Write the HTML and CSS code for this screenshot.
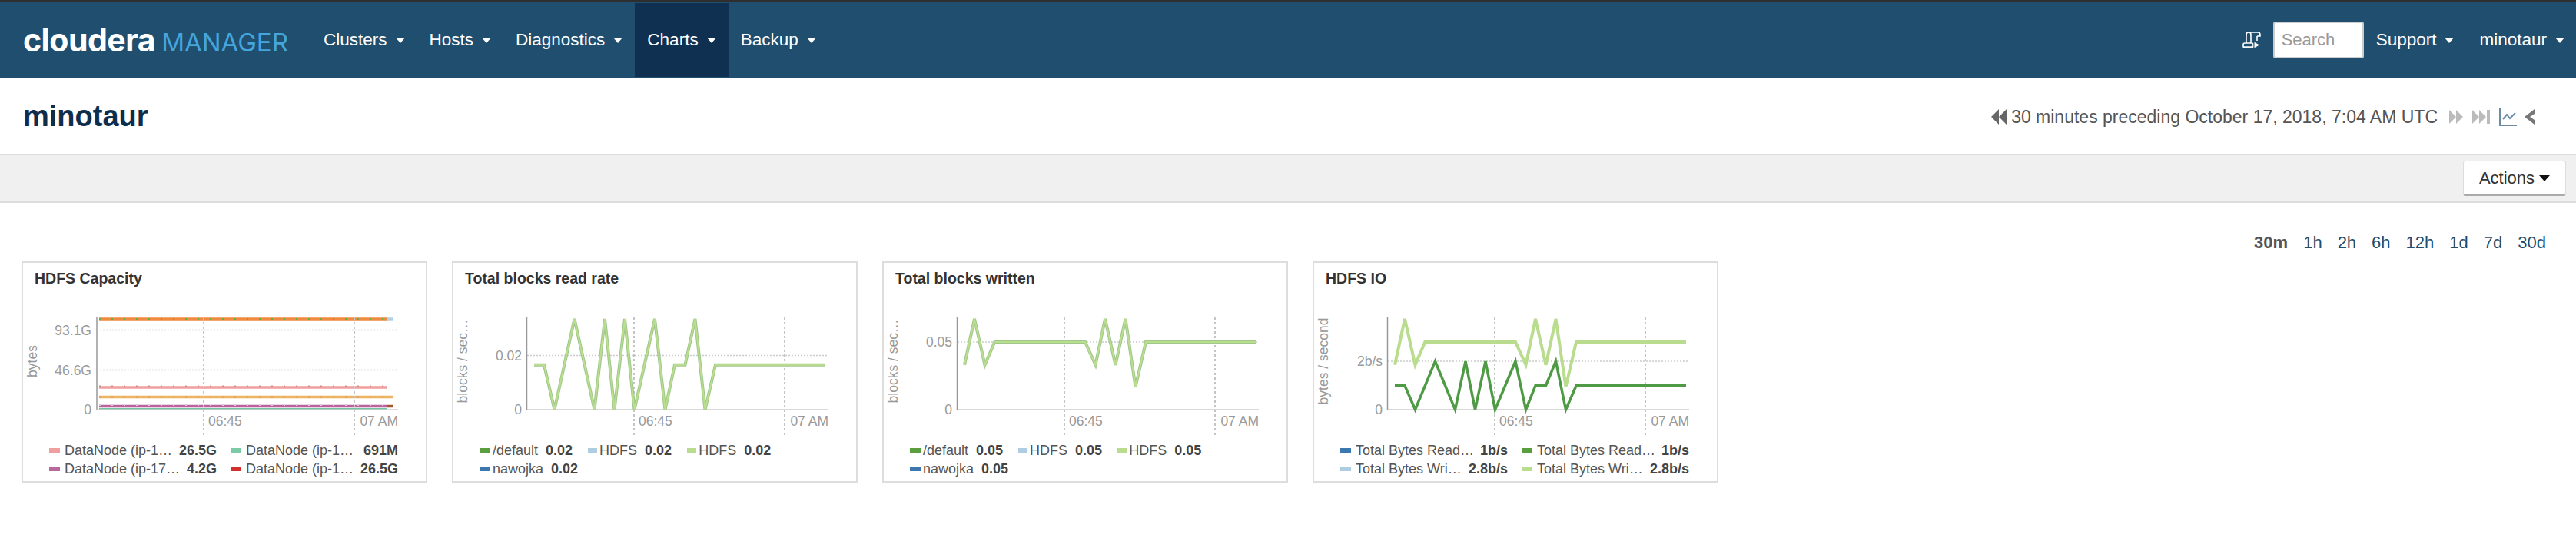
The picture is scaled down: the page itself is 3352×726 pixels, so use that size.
FILE: index.html
```html
<!DOCTYPE html>
<html lang="en">
<head>
  <meta charset="UTF-8">
  <title>minotaur - Cloudera Manager</title>
  <link rel="stylesheet" href="styles.css">
</head>
<body>

  <nav class="navbar">
    <a class="brand"><span class="brand-name">cloudera</span> <span class="brand-product">MANAGER</span></a>
    <ul class="nav-list">
      <li class="nav-item">Clusters <i class="caret"></i></li>
      <li class="nav-item">Hosts <i class="caret"></i></li>
      <li class="nav-item">Diagnostics <i class="caret"></i></li>
      <li class="nav-item active">Charts <i class="caret"></i></li>
      <li class="nav-item">Backup <i class="caret"></i></li>
    </ul>
    <div class="nav-right">
      <svg class="scroll-icon" viewBox="0 0 24 22" width="24" height="22">
        <path d="M1 20h13M5 15V4a3 3 0 0 1 3-3h12a3 3 0 0 1 3 3v2h-4M8 1a3 3 0 0 1 3 3v11M19 6v6"/>
        <rect x="1" y="15" width="13" height="6" rx="2"/>
        <path class="scroll-play" d="M15 13l8 4.5-8 4.5z"/>
      </svg>
      <input class="nav-search" type="text" placeholder="Search">
      <span class="nav-item support">Support <i class="caret"></i></span>
      <span class="nav-item user">minotaur <i class="caret"></i></span>
    </div>
  </nav>

  <header class="page-header">
    <h1>minotaur</h1>
    <div class="time-control">
      <svg class="t-icon dark" viewBox="0 0 20 22" width="20" height="22"><path d="M10 1v20L0 11zM20 1v20L10 11z"/></svg>
      <span class="time-label">30 minutes preceding October 17, 2018, 7:04 AM UTC</span>
      <svg class="t-icon muted next" viewBox="0 0 18 22" width="18" height="22"><path d="M0 2v18l9-9zM9 2v18l9-9z"/></svg>
      <svg class="t-icon muted end" viewBox="0 0 23 22" width="23" height="22"><path d="M0 2v18l9-9zM9 2v18l9-9zM19 2h4v18h-4z"/></svg>
      <svg class="chart-icon" viewBox="0 0 23 24" width="23" height="24">
        <path d="M1 0v23h22M5 15l5-6 4 5 7-7"/>
      </svg>
      <svg class="t-icon chevron" viewBox="0 0 13 22" width="13" height="22"><path d="M13 1v6l-6 4 6 4v6L0 11z"/></svg>
    </div>
  </header>

  <div class="toolbar">
    <button class="btn-actions">Actions <i class="caret dark"></i></button>
  </div>

  <div class="range-links">
    <a class="current">30m</a>
    <a>1h</a>
    <a>2h</a>
    <a>6h</a>
    <a>12h</a>
    <a>1d</a>
    <a>7d</a>
    <a>30d</a>
  </div>

  <main class="chart-row">

    <section class="chart-card">
      <h3>HDFS Capacity</h3>
      <svg class="plot" viewBox="0 0 524 174" width="524" height="174">
        <path class="grid" d="M96 33.5H488M96 85.5H488"/>
        <path class="band" stroke="#f08a3c" d="M99 19H474"/>
        <path class="band" stroke="#b0d0e4" d="M474 19H482"/>
        <path class="band-dots" stroke="#6aa84f" d="M99 19H474"/>
        <path class="band" stroke="#ef9f9d" d="M99 108H474"/>
        <path class="band-dots" stroke="#d98b80" d="M99 106.5H474"/>
        <path class="band" stroke="#ebb561" d="M99 120.5H482"/>
        <path class="band-dots" stroke="#f08a6c" d="M99 120.5H474"/>
        <path class="band" stroke="#b9629c" d="M99 132.5H474"/>
        <path class="band" stroke="#a9562e" d="M474 132.5H482"/>
        <path class="band-dots" stroke="#e0c8e0" d="M99 131H474"/>
        <path class="band thin" stroke="#6fc39d" d="M99 136H474"/>
        <path class="vgrid" d="M235 17V170M431 17V170"/>
        <path class="axis-y" d="M96 17V137"/>
        <path class="axis-x" d="M96 137H488"/>
        <text class="tick" x="89" y="39.500" text-anchor="end">93.1G</text>
        <text class="tick" x="89" y="91.500" text-anchor="end">46.6G</text>
        <text class="tick" x="89" y="143" text-anchor="end">0</text>
        <text class="tick" x="241" y="158">06:45</text>
        <text class="tick" x="488" y="158" text-anchor="end">07 AM</text>
        <text class="tick" transform="translate(18 74) rotate(-90)" text-anchor="middle">bytes</text>
      </svg>
      <div class="legend two-col">
        <div class="legend-item"><i class="swatch" style="background:#ef9f9d"></i><span class="name">DataNode (ip-1…</span><b>26.5G</b></div>
        <div class="legend-item"><i class="swatch" style="background:#7bcba6"></i><span class="name">DataNode (ip-1…</span><b>691M</b></div>
        <div class="legend-item"><i class="swatch" style="background:#b9689b"></i><span class="name">DataNode (ip-17…</span><b>4.2G</b></div>
        <div class="legend-item"><i class="swatch" style="background:#d2322d"></i><span class="name">DataNode (ip-1…</span><b>26.5G</b></div>
      </div>
    </section>

    <section class="chart-card">
      <h3>Total blocks read rate</h3>
      <svg class="plot" viewBox="0 0 524 174" width="524" height="174">
        <path class="grid" d="M96 66.500H488"/>
        <path class="vgrid" d="M235 17V170M431 17V170"/>
        <path class="axis-y" d="M95.500 17V137"/>
        <path class="axis-x" d="M96 137H488"/>
        <polyline class="line-under" points="105,78.700 118,78.700 131.500,137 157.500,19 183.500,137 197,19 209.500,137 223,19 235.500,137 262,19 275.500,137 288,78.700 301.500,78.700 314.500,19 327.500,137 341,78.700 484,78.700"/>
        <polyline class="line-over" points="105,78.700 118,78.700 131.500,137 157.500,19 183.500,137 197,19 209.500,137 223,19 235.500,137 262,19 275.500,137 288,78.700 301.500,78.700 314.500,19 327.500,137 341,78.700 484,78.700"/>
        <text class="tick" x="89" y="72.500" text-anchor="end">0.02</text>
        <text class="tick" x="89" y="143" text-anchor="end">0</text>
        <text class="tick" x="241" y="158">06:45</text>
        <text class="tick" x="488" y="158" text-anchor="end">07 AM</text>
        <text class="tick" transform="translate(18 74) rotate(-90)" text-anchor="middle">blocks / sec…</text>
      </svg>
      <div class="legend flow">
        <div class="legend-item"><i class="swatch" style="background:#5a9e3f"></i><span class="name">/default</span><b>0.02</b></div>
        <div class="legend-item"><i class="swatch narrow" style="background:#aecde2"></i><span class="name">HDFS</span><b>0.02</b></div>
        <div class="legend-item"><i class="swatch narrow" style="background:#b9dc8e"></i><span class="name">HDFS</span><b>0.02</b></div>
        <div class="legend-break"></div>
        <div class="legend-item"><i class="swatch" style="background:#3c78b0"></i><span class="name">nawojka</span><b>0.02</b></div>
      </div>
    </section>

    <section class="chart-card">
      <h3>Total blocks written</h3>
      <svg class="plot" viewBox="0 0 524 174" width="524" height="174">
        <path class="grid" d="M96 49H488"/>
        <path class="vgrid" d="M235 17V170M431 17V170"/>
        <path class="axis-y" d="M95.500 17V137"/>
        <path class="axis-x" d="M96 137H488"/>
        <polyline class="line-under" points="105,78.700 118,19 131.500,78.700 144.300,49 262,49 275.500,78.700 288,19 301.500,78.700 314.500,19 327.500,107.300 341,49 484,49"/>
        <polyline class="line-over" points="105,78.700 118,19 131.500,78.700 144.300,49 262,49 275.500,78.700 288,19 301.500,78.700 314.500,19 327.500,107.300 341,49 484,49"/>
        <text class="tick" x="89" y="55" text-anchor="end">0.05</text>
        <text class="tick" x="89" y="143" text-anchor="end">0</text>
        <text class="tick" x="241" y="158">06:45</text>
        <text class="tick" x="488" y="158" text-anchor="end">07 AM</text>
        <text class="tick" transform="translate(18 74) rotate(-90)" text-anchor="middle">blocks / sec…</text>
      </svg>
      <div class="legend flow">
        <div class="legend-item"><i class="swatch" style="background:#5a9e3f"></i><span class="name">/default</span><b>0.05</b></div>
        <div class="legend-item"><i class="swatch narrow" style="background:#aecde2"></i><span class="name">HDFS</span><b>0.05</b></div>
        <div class="legend-item"><i class="swatch narrow" style="background:#b9dc8e"></i><span class="name">HDFS</span><b>0.05</b></div>
        <div class="legend-break"></div>
        <div class="legend-item"><i class="swatch" style="background:#3c78b0"></i><span class="name">nawojka</span><b>0.05</b></div>
      </div>
    </section>

    <section class="chart-card">
      <h3>HDFS IO</h3>
      <svg class="plot" viewBox="0 0 524 174" width="524" height="174">
        <path class="grid" d="M96 74H488"/>
        <path class="vgrid" d="M235 17V170M431 17V170"/>
        <path class="axis-y" d="M95.500 17V137"/>
        <path class="axis-x" d="M96 137H488"/>
        <polyline class="line-light" points="105,78.700 118,19 131.500,78.700 144.300,49 262,49 275.500,78.700 288,19 301.500,78.700 314.500,19 327.500,107.300 341,49 484,49"/>
        <polyline class="line-dark" points="105,105.700 118,105.700 131.500,137 157.500,74 183.500,137 197,74 209.500,137 223,74 235.500,137 262,74 275.500,137 288,105.700 301.500,105.700 314.500,74 327.500,137 341,105.700 484,105.700"/>
        <text class="tick" x="89" y="80" text-anchor="end">2b/s</text>
        <text class="tick" x="89" y="143" text-anchor="end">0</text>
        <text class="tick" x="241" y="158">06:45</text>
        <text class="tick" x="488" y="158" text-anchor="end">07 AM</text>
        <text class="tick" transform="translate(18 74) rotate(-90)" text-anchor="middle">bytes / second</text>
      </svg>
      <div class="legend two-col">
        <div class="legend-item"><i class="swatch" style="background:#3c78b0"></i><span class="name">Total Bytes Read…</span><b>1b/s</b></div>
        <div class="legend-item"><i class="swatch" style="background:#5a9e3f"></i><span class="name">Total Bytes Read…</span><b>1b/s</b></div>
        <div class="legend-item"><i class="swatch" style="background:#aecde2"></i><span class="name">Total Bytes Wri…</span><b>2.8b/s</b></div>
        <div class="legend-item"><i class="swatch" style="background:#b9dc8e"></i><span class="name">Total Bytes Wri…</span><b>2.8b/s</b></div>
      </div>
    </section>

  </main>

</body>
</html>
```

FILE: styles.css
```css
* {
  box-sizing: border-box;
}
body {
  margin: 0;
  background: #fff;
  font-family: "Liberation Sans", Arial, sans-serif;
  font-size: 22px;
  color: #555;
}

/* top bar */
.navbar {
  display: flex;
  align-items: stretch;
  height: 102px;
  padding: 2px 0;
  border-top: 2px solid #2e2e2e;
  background: #1f4e6f;
  color: #fff;
}
.brand {
  display: flex;
  align-items: baseline;
  gap: 8px;
  width: 375px;
  padding: 30px 0 0 30px;
  font-family: Inter, "Liberation Sans", sans-serif;
  line-height: 36px;
}
.brand-name {
  font-size: 41px;
  font-weight: 700;
  letter-spacing: -0.5px;
}
.brand-product {
  font-size: 33px;
  font-weight: 400;
  color: #45a5dd;
}
.nav-list {
  display: flex;
  margin: 0 0 0 30px;
  padding: 0;
  list-style: none;
}
.nav-item {
  display: flex;
  align-items: center;
  gap: 11px;
  padding: 0 16px;
  font-size: 22.500px;
  white-space: nowrap;
}
.nav-item.active {
  background: #0f3050;
}
.caret {
  display: inline-block;
  width: 0;
  height: 0;
  border-top: 7px solid #fff;
  border-left: 6px solid transparent;
  border-right: 6px solid transparent;
}
.caret.dark {
  border-top: 8px solid #111;
  border-left-width: 7px;
  border-right-width: 7px;
}
.nav-right {
  display: flex;
  align-items: center;
  margin-left: auto;
}
.scroll-icon {
  margin-right: 16px;
  fill: none;
  stroke: #fff;
  stroke-width: 1.6;
}
.scroll-icon .scroll-play {
  fill: #fff;
  stroke: #1f4e6f;
  stroke-width: 1;
}
.nav-search {
  width: 118px;
  height: 48px;
  padding: 0 9px;
  border: 2px solid #ccc;
  border-radius: 3px;
  font: inherit;
  color: #555;
}
.nav-search::placeholder {
  color: #999;
}
.nav-item.user {
  padding: 0 15px 0 17px;
}

/* page title */
.page-header {
  display: flex;
  align-items: center;
  justify-content: space-between;
  height: 98px;
  padding: 0 54px 0 30px;
}
.page-header h1 {
  margin: 0;
  font-size: 38px;
  font-weight: bold;
  color: #0f2e4c;
}
.time-control {
  display: flex;
  align-items: center;
  padding-top: 2px;
}
.time-label {
  margin: 0 15px 0 6px;
  font-size: 23px;
}
.t-icon {
  fill: #666;
}
.t-icon.muted {
  fill: #bbb;
}
.t-icon.end {
  margin-left: 12px;
}
.chart-icon {
  margin-left: 12px;
  fill: none;
  stroke: #6a8ca5;
  stroke-width: 2;
}
.t-icon.chevron {
  margin-left: 10px;
  fill: #777;
}

/* actions strip */
.toolbar {
  display: flex;
  align-items: center;
  justify-content: flex-end;
  height: 64px;
  padding-right: 13px;
  border-top: 2px solid #ddd;
  border-bottom: 2px solid #ddd;
  background: #f0f0f0;
}
.btn-actions {
  display: flex;
  align-items: center;
  justify-content: center;
  gap: 6px;
  width: 134px;
  height: 46px;
  border: 1px solid #ddd;
  border-bottom: 2px solid #aaa;
  border-radius: 3px;
  background: #fff;
  font: inherit;
  color: #333;
}

/* time ranges */
.range-links {
  display: flex;
  justify-content: flex-end;
  align-items: center;
  gap: 20px;
  height: 76px;
  padding: 28px 39px 0 0;
  color: #1f4e6f;
}
.range-links .current {
  font-weight: bold;
  color: #555;
}

/* chart cards */
.chart-row {
  display: flex;
  gap: 32px;
  padding-left: 28px;
}
.chart-card {
  width: 528px;
  height: 288px;
  padding-top: 8px;
  border: 2px solid #ddd;
}
.chart-card h3 {
  margin: 0 0 22px;
  padding-left: 15px;
  font-size: 19.500px;
  line-height: 24px;
  color: #333;
}
.plot {
  display: block;
}
.grid {
  fill: none;
  stroke: #ccc;
  stroke-width: 1.500;
  stroke-dasharray: 2 2;
}
.vgrid {
  fill: none;
  stroke: #c4c4c4;
  stroke-width: 2;
  stroke-dasharray: 3 3;
}
.axis-y {
  stroke: #999;
  stroke-width: 1.500;
}
.axis-x {
  stroke: #ccc;
  stroke-width: 1.500;
}
.tick {
  font-size: 17.500px;
  fill: #999;
}
.band {
  fill: none;
  stroke-width: 3.500;
}
.band.thin {
  stroke-width: 2;
}
.band-dots {
  fill: none;
  stroke-width: 2;
  stroke-dasharray: 2 14;
}
.line-under,
.line-over,
.line-light,
.line-dark {
  fill: none;
  stroke-linejoin: miter;
}
.line-under {
  stroke: #a0c78c;
  stroke-width: 4;
}
.line-over {
  stroke: #bade8d;
  stroke-width: 2;
}
.line-light {
  stroke: #b9dc8e;
  stroke-width: 4;
}
.line-dark {
  stroke: #4f9a45;
  stroke-width: 3.500;
}

/* legends */
.legend {
  margin-top: 4px;
  padding-left: 34px;
  font-size: 18px;
  line-height: 24px;
}
.legend.two-col {
  display: grid;
  grid-template-columns: 218px 218px;
  column-gap: 18px;
}
.legend.flow {
  display: flex;
  flex-wrap: wrap;
  column-gap: 20px;
}
.legend-break {
  flex-basis: 100%;
}
.legend-item {
  display: flex;
  align-items: center;
  white-space: nowrap;
}
.two-col .legend-item {
  justify-content: space-between;
}
.two-col .name {
  flex: 1;
  margin-left: 6px;
}
.flow .name {
  margin: 0 10px 0 3px;
}
.swatch {
  flex: none;
  width: 14px;
  height: 6px;
}
.swatch.narrow {
  width: 12px;
}
.legend b {
  color: #444;
}
```
